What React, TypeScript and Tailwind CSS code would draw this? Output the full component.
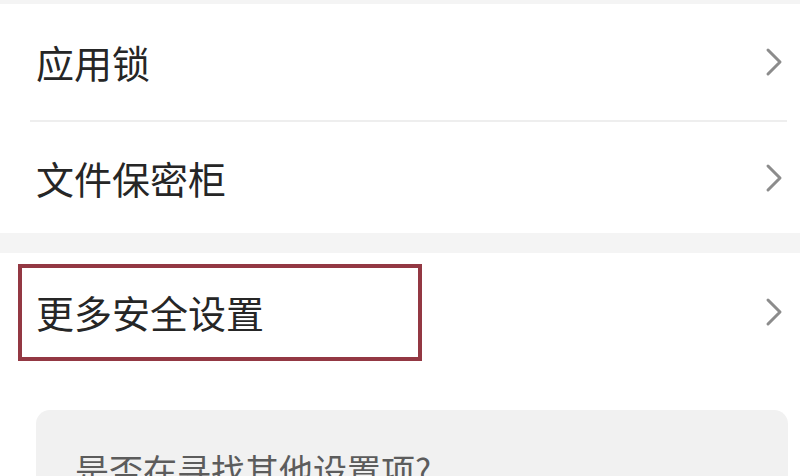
import React from "react";

const font = { fontFamily: '"Noto Sans CJK SC", "Noto Sans", sans-serif' };

function Chevron() {
  return (
    <svg width="20" height="30" viewBox="0 0 20 30" className="shrink-0">
      <polyline points="4,3 16,15 4,27" fill="none" stroke="#8c8c8c" strokeWidth="3" strokeLinecap="round" strokeLinejoin="round" />
    </svg>
  );
}

export default function App() {
  return (
    <div className="w-[800px] h-[476px] overflow-hidden bg-[#f4f4f4] flex flex-col" style={font}>
      <div className="h-[4px] shrink-0" />
      <div className="bg-white shrink-0">
        <div className="flex items-center justify-between pl-[36px] pr-[16px] h-[116px]">
          <span className="text-[38px] leading-none text-[#262626]">应用锁</span>
          <Chevron />
        </div>
        <div className="ml-[30px] mr-[13px] h-[2px] bg-[#eeeeee]" />
        <div className="h-[111px] flex items-center justify-between pl-[36px] pr-[16px]">
          <span className="text-[38px] leading-none text-[#262626]">文件保密柜</span>
          <Chevron />
        </div>
      </div>
      <div className="h-[20px] shrink-0" />
      <div className="bg-white flex-1 flex flex-col">
        <div className="relative h-[118px] flex items-center justify-between pl-[36px] pr-[16px] shrink-0">
          <span className="text-[38px] leading-none text-[#262626]">更多安全设置</span>
          <Chevron />
          <div className="absolute left-[18px] top-[11px] w-[404px] h-[97px] border-[4px] border-[#933843] pointer-events-none" />
        </div>
        <div className="h-[39px] shrink-0" />
        <div className="ml-[36px] mr-[12px] flex-1 bg-[#f1f1f1] rounded-t-[14px] pl-[39px] pt-[43px]">
          <span className="text-[34px] leading-[34px] text-[#5c5c5c]">是否在寻找其他设置项?</span>
        </div>
      </div>
    </div>
  );
}
